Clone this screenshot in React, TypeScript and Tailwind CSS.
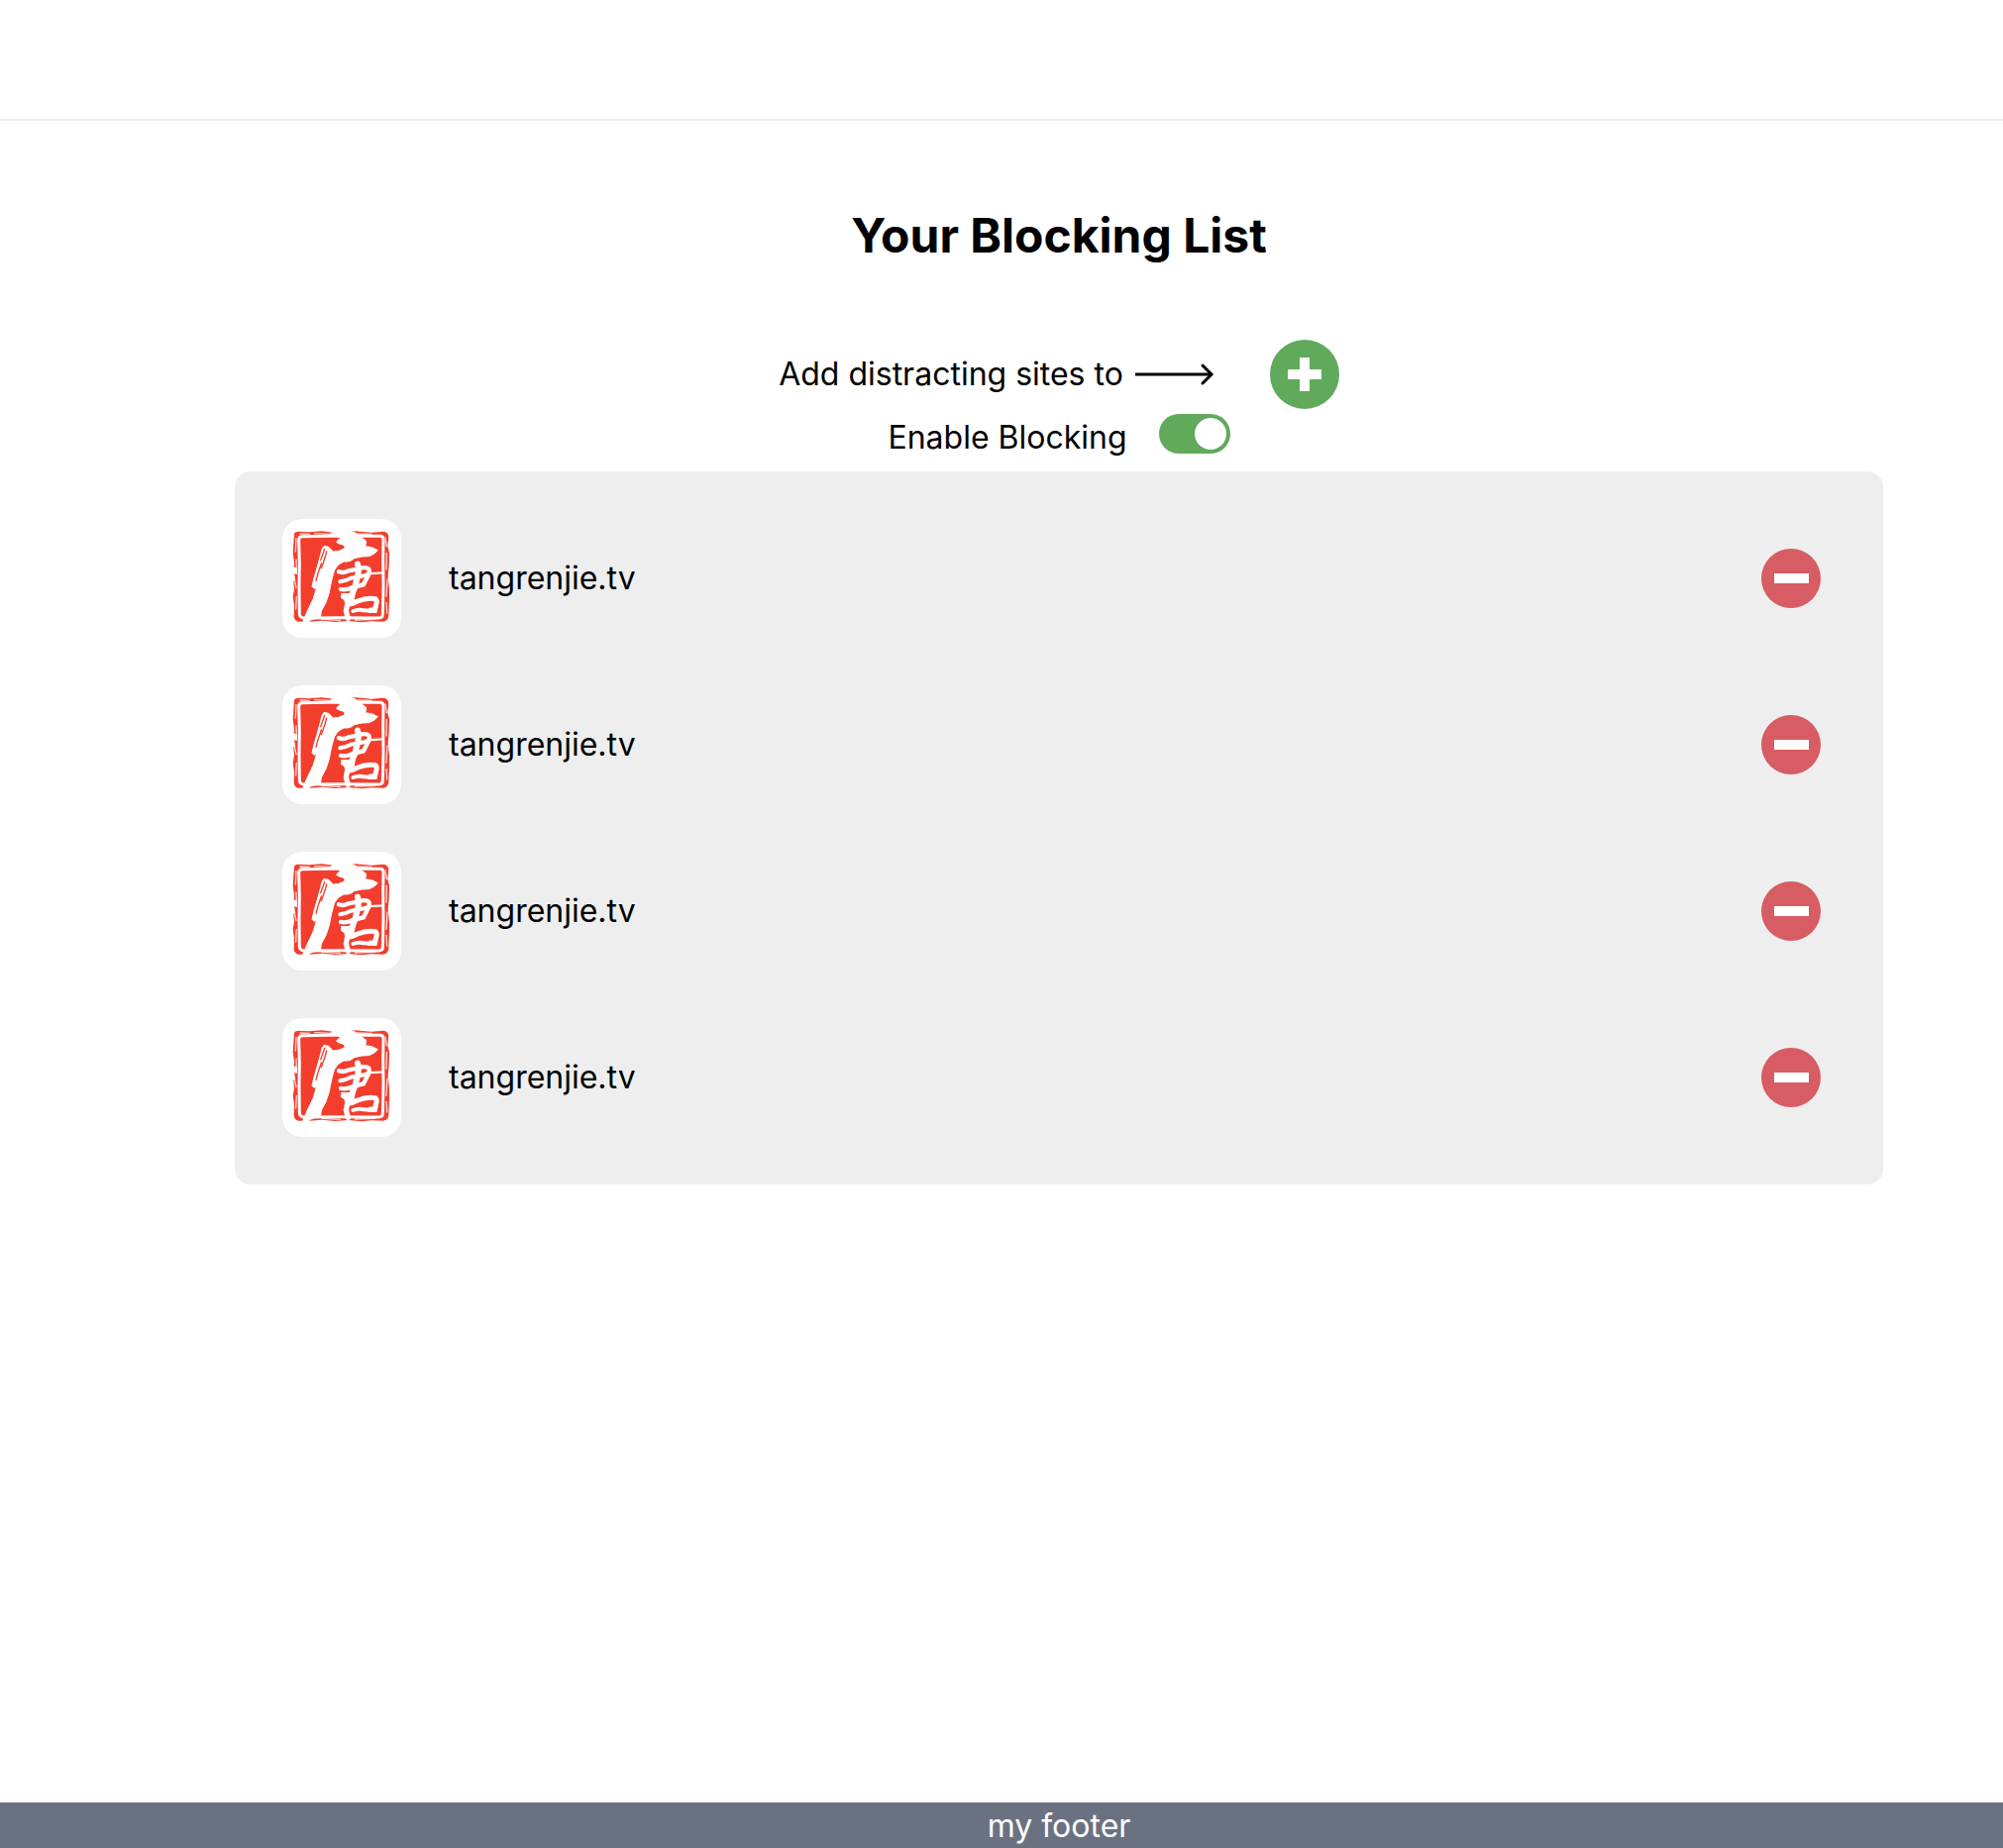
import React, { useState } from "react";

const sites = ["tangrenjie.tv", "tangrenjie.tv", "tangrenjie.tv", "tangrenjie.tv"];

function SealLogo() {
  return (
    <svg viewBox="30 27 360 360" className="size-[120px]" aria-hidden="true">
      {/* carved frame */}
      <path
        fill="#f33e2e"
        d="M66 72 Q68 65 80 65 L110 67 L150 64 L172 67 L215 66 L222 70 L250 64 L300 68 L336 65 Q350 66 352 80 L349 110 L354 130 L353 170 L350 200 L354 240 L354 270 L352 322 Q350 336 336 338 L300 337 L270 340 L230 336 L190 339 L150 335 L112 338 L78 338 Q65 334 65 320 L66 290 L62 262 L66 240 L62 198 L66 160 L62 130 Z"
      />
      <path
        fill="none"
        stroke="#fff"
        strokeWidth="9"
        strokeLinejoin="round"
        d="M90 80 L170 79 L260 78 L326 79 Q336 79 336 90 L335 150 L336 230 L334 316 Q334 327 322 327 L210 326 L100 327 Q82 327 82 314 L81 230 L82 160 L80 92 Q80 80 90 80 Z"
      />
      <path
        fill="none"
        stroke="#fff"
        strokeOpacity="0.8"
        strokeWidth="4"
        strokeLinecap="round"
        d="M84 72 L112 73 M128 71 L176 73 M250 72 L300 73 M342 84 L346 110 M346 130 L345 180 M348 210 L345 262 M345 280 L347 312 M250 333 L310 331 M150 331 L205 334 M72 86 L70 126 M72 150 L73 190 M67 214 L72 236 M73 262 L71 300"
      />
      <path fill="#fff" d="M66 172 L74 178 L74 196 L66 192 L70 214 L58 214 L58 172 Z M174 62 L184 74 L220 74 L232 60 Z" />
      {/* radical */}
      <path
        fill="#fff"
        stroke="#fff"
        strokeWidth="3"
        strokeLinejoin="round"
        d="M176 72 Q190 78 207 84 Q198 90 194 97 Q202 104 214 105 Q224 112 216 118 Q198 127 184 126 L170 112 L156 109 Q148 118 146 136 L136 172 L126 206 L120 232 L127 238 L134 234 L124 268 L106 306 L94 334 L88 350 L102 348 L114 334 L146 322 L148 306 Q164 282 172 250 Q180 204 188 182 Q196 164 216 156 Q236 158 248 146 Q272 139 292 140 Q310 134 319 122 Q302 110 280 110 Q286 102 283 93 L270 84 L256 78 L250 68 L230 66 Z"
      />
      <path fill="none" stroke="#f33e2e" strokeWidth="4" strokeLinecap="round" d="M158 118 L152 136 L146 152 M164 126 L160 142 L148 176 M148 162 L138 192 L132 214" />
      {/* middle brush strokes */}
      <g fill="none" stroke="#fff" strokeLinecap="round" strokeLinejoin="round">
        <path strokeWidth="13" d="M201 187 Q214 192 230 184 L262 178 Q282 170 292 179 Q296 188 288 202 L276 226" />
        <path strokeWidth="18" d="M258 164 Q263 178 258 202 L249 236 L238 262" />
        <path strokeWidth="12" d="M205 217 Q222 214 238 206 L286 197" />
        <path strokeWidth="7" d="M284 193 L334 190" />
        <path strokeWidth="13" d="M207 240 Q222 244 242 235 L274 226" />
        <path strokeWidth="16" d="M215 262 Q228 268 227 284 L223 306 L229 328" />
        <path strokeWidth="15" d="M228 286 Q244 284 258 276 Q286 264 312 269 Q319 275 313 290 L309 304" />
        <path strokeWidth="12" d="M244 306 Q262 299 276 304 L308 306" />
      </g>
      <path fill="#fff" d="M234 252 L252 250 L248 272 L236 278 L218 270 L206 252 Z M292 296 L320 294 L316 312 L290 312 Z" />
    </svg>
  );
}

function LongArrow() {
  return (
    <svg viewBox="0 0 80 24" className="ml-3 h-6 w-20" fill="none" stroke="currentColor" strokeWidth="3" aria-hidden="true">
      <path d="M0 12h77" />
      <path d="M68 3l9 9-9 9" strokeLinecap="round" />
    </svg>
  );
}

export default function App() {
  const [enabled, setEnabled] = useState(true);
  return (
    <div className="flex min-h-screen flex-col bg-white font-['Inter',sans-serif] text-[32px] leading-[48px] text-black">
      <header className="h-[122px] border-b-2 border-[#ededed]" />
      <main className="flex grow flex-col pr-[121px] pl-[237px]">
        <h1 className="mt-20 text-center text-5xl leading-[72px] font-bold">Your Blocking List</h1>
        <div className="mt-[69px] flex items-center justify-center">
          <p>Add distracting sites to</p>
          <LongArrow />
          <button type="button" aria-label="Add site" className="ml-14 flex size-[70px] items-center justify-center rounded-full bg-[#61aa5b]">
            <svg viewBox="0 0 34 34" className="size-[34px]" fill="#fff" aria-hidden="true">
              <path d="M12 0h10v12h12v10H22v12H12V22H0V12h12z" />
            </svg>
          </button>
        </div>
        <label className="mt-[5px] flex cursor-pointer items-start justify-center gap-8">
          <span>Enable Blocking</span>
          <input type="checkbox" role="switch" checked={enabled} onChange={() => setEnabled(!enabled)} className="peer sr-only" />
          <span className="flex h-10 w-[72px] items-center rounded-full bg-gray-300 p-1 peer-checked:justify-end peer-checked:bg-[#61aa5b]">
            <span className="size-8 rounded-full bg-white" />
          </span>
        </label>
        <ul className="mt-[10px] flex flex-col gap-12 rounded-2xl bg-[#eeeeee] py-12 pr-[63px] pl-12">
          {sites.map((site, i) => (
            <li key={i} className="flex items-center">
              <span className="overflow-hidden rounded-[20px] bg-white"><SealLogo /></span>
              <span className="ml-12 grow">{site}</span>
              <button type="button" aria-label={"Remove " + site} className="flex size-[60px] items-center justify-center rounded-full bg-[#d75c63]">
                <span className="h-[10px] w-[35px] bg-white" />
              </button>
            </li>
          ))}
        </ul>
      </main>
      <footer className="h-[46px] bg-gray-500 pl-[116px] text-center text-white">my footer</footer>
    </div>
  );
}
